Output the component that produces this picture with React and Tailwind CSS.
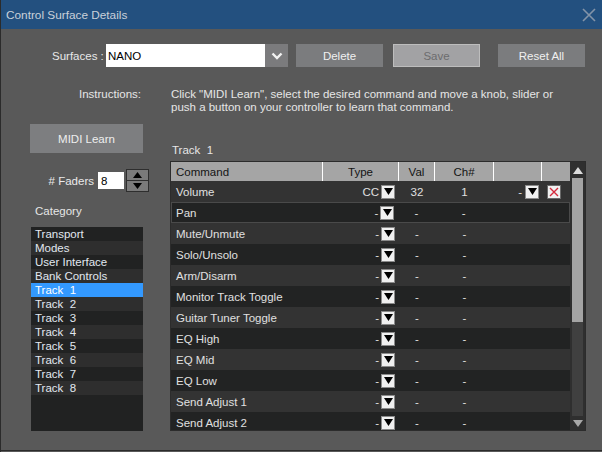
import React from "react";

const Tri = ({ up = false, color = "#000", w = 9, h = 6 }) => (
  <svg width={w} height={h} viewBox={`0 0 ${w} ${h}`} className="block">
    {up ? (
      <polygon points={`0,${h} ${w},${h} ${w / 2},0`} fill={color} />
    ) : (
      <polygon points={`0,0 ${w},0 ${w / 2},${h}`} fill={color} />
    )}
  </svg>
);

const DropBox = () => (
  <div className="w-[14px] h-[14px] bg-[#f0f0f0] border border-[#8a8a8a] flex items-center justify-center">
    <Tri w={9} h={7} />
  </div>
);

const rows = [
  "Volume",
  "Pan",
  "Mute/Unmute",
  "Solo/Unsolo",
  "Arm/Disarm",
  "Monitor Track Toggle",
  "Guitar Tuner Toggle",
  "EQ High",
  "EQ Mid",
  "EQ Low",
  "Send Adjust 1",
  "Send Adjust 2",
];

const cats = [
  "Transport",
  "Modes",
  "User Interface",
  "Bank Controls",
  "Track  1",
  "Track  2",
  "Track  3",
  "Track  4",
  "Track  5",
  "Track  6",
  "Track  7",
  "Track  8",
];

export default function App() {
  return (
    <div
      className="w-[602px] h-[452px] bg-[#595959] border-l border-[#2b2b2b] overflow-hidden flex flex-col text-[11.5px] leading-[14px] text-[#e6e6e6]"
      style={{ fontFamily: '"Liberation Sans", Arial, sans-serif' }}
    >
      {/* Title bar */}
      <div className="h-[29px] shrink-0 bg-[#23507f] flex items-center justify-between pl-[5px] pr-[6px]">
        <span className="text-[#c9d0da] text-[11.8px]">Control Surface Details</span>
        <svg width="14" height="14" viewBox="0 0 14 14" className="block">
          <path d="M1 1 L13 13 M13 1 L1 13" stroke="#8494a8" strokeWidth="1.6" />
        </svg>
      </div>

      {/* Surfaces row */}
      <div className="flex items-center mt-[15px] h-[23px] shrink-0">
        <span className="ml-[51px] w-[54px] text-[#e8e8e8] whitespace-nowrap">Surfaces :</span>
        <div className="w-[159px] h-[23px] bg-white text-black flex items-center pl-[2px]">NANO</div>
        <div className="w-[23px] h-[23px] bg-[#7b7b7d] flex items-center justify-center">
          <svg width="12" height="8" viewBox="0 0 12 8" className="block">
            <path d="M1.5 1.5 L6 6 L10.5 1.5" stroke="#f2f2f2" strokeWidth="2.4" fill="none" />
          </svg>
        </div>
        <div className="ml-[8px] w-[87px] h-[23px] bg-[#7b7c7e] flex items-center justify-center text-[#f0f0f0]">Delete</div>
        <div className="ml-[10px] w-[87px] h-[23px] bg-[#a2a2a4] border border-[#bdbdbd] flex items-center justify-center text-[#6c6c6e]">Save</div>
        <div className="ml-[18px] w-[87px] h-[23px] bg-[#7b7c7e] flex items-center justify-center text-[#f0f0f0]">Reset All</div>
      </div>

      {/* Instructions */}
      <div className="flex mt-[21px] shrink-0 leading-[13px]">
        <span className="ml-[78px] w-[92px] text-[#e6e6e6]">Instructions:</span>
        <span className="w-[410px] text-[#e6e6e6]">
          Click "MIDI Learn", select the desired command and move a knob, slider or
          <br />
          push a button on your controller to learn that command.
        </span>
      </div>

      {/* Main columns */}
      <div className="flex mt-[10px]">
        {/* Left column */}
        <div className="ml-[29px] w-[140px] flex flex-col">
          <div className="w-[113px] h-[29px] bg-[#7d7e80] flex items-center justify-center text-[#eeeeee]">MIDI Learn</div>
          <div className="flex items-center mt-[16px] h-[23px]">
            <span className="w-[64px] text-right text-[#eaeaea]">#&nbsp;Faders</span>
            <div className="ml-[4px] w-[26px] h-[17px] bg-white text-black flex items-center pl-[3px]">8</div>
            <div className="ml-[2px] w-[23px] h-[23px] border border-[#2e2e2e] flex flex-col">
              <div className="flex-1 bg-[#7a7a7a] border-b border-[#2e2e2e] flex items-center justify-center">
                <Tri up w={9} h={6} />
              </div>
              <div className="flex-1 bg-[#7a7a7a] flex items-center justify-center">
                <Tri w={9} h={6} />
              </div>
            </div>
          </div>
          <div className="ml-[5px] mt-[12px] text-[#e6e6e6]">Category</div>
          <div className="ml-[1px] mt-[9px] w-[112px] h-[204px] bg-[#212222] flex flex-col">
            {cats.map((c, i) => (
              <div
                key={c}
                className={
                  "h-[14px] pl-[4px] whitespace-pre leading-[14px] text-[#e2e8f0] " +
                  (i === 4 ? "bg-[#3399ff] text-white" : i % 2 === 0 ? "bg-[#212222]" : "bg-[#2e2e2e]")
                }
              >
                {c}
              </div>
            ))}
          </div>
        </div>

        {/* Right column */}
        <div className="flex flex-col">
          <div className="ml-[2px] mt-[19px] whitespace-pre text-[#e6e6e6]">Track  1</div>
          <div className="mt-[4px] w-[416px] h-[270px] border border-[#2c2c2c] flex">
            <div className="w-[399px] flex flex-col overflow-hidden">
              {/* Header */}
              <div className="h-[19px] shrink-0 bg-[#a5a5a5] text-[#141414] flex">
                <div className="w-[152px] border-r border-white pl-[5px] flex items-center">Command</div>
                <div className="w-[76px] border-r border-white flex items-center justify-center">Type</div>
                <div className="w-[36px] border-r border-white flex items-center justify-center">Val</div>
                <div className="w-[59px] border-r border-white flex items-center justify-center">Ch#</div>
                <div className="w-[48px] border-r border-white"></div>
                <div className="w-[28px]"></div>
              </div>
              {/* Rows */}
              {rows.map((r, i) => {
                const first = i === 0;
                return (
                  <div
                    key={r}
                    className={
                      "h-[21px] shrink-0 flex items-center text-[#e0e0e0] " +
                      (i % 2 === 0 ? "bg-[#333333]" : "bg-[#222323]") +
                      (i === 1 ? " border border-[#4a4a4a]" : "")
                    }
                  >
                    <div className={(i === 1 ? "w-[151px] pl-[4px]" : "w-[152px] pl-[5px]") + " truncate"}>{r}</div>
                    <div className="w-[76px] flex items-center justify-end pr-[4px] gap-[2px]">
                      <span>{first ? "CC" : "-"}</span>
                      <DropBox />
                    </div>
                    <div className="w-[36px] text-center">{first ? "32" : "-"}</div>
                    <div className="w-[59px] text-center">{first ? "1" : "-"}</div>
                    <div className="w-[48px] flex items-center justify-end pr-[3px] gap-[3px]">
                      {first && (
                        <>
                          <span>-</span>
                          <DropBox />
                        </>
                      )}
                    </div>
                    <div className="w-[28px] flex items-center pl-[5px]">
                      {first && (
                        <div className="w-[14px] h-[14px] bg-[#f0f0f0] border border-[#6a6a6a] flex items-center justify-center">
                          <svg width="10" height="10" viewBox="0 0 10 10" className="block">
                            <path d="M1 1 L9 9 M9 1 L1 9" stroke="#d42a3c" strokeWidth="1.4" />
                          </svg>
                        </div>
                      )}
                    </div>
                  </div>
                );
              })}
            </div>
            {/* Scrollbar */}
            <div className="w-[15px] bg-[#2f2f2f] flex flex-col items-center">
              <div className="h-[16px] w-full flex items-center justify-center">
                <Tri up color="#dcdcdc" w={10} h={7} />
              </div>
              <div className="flex-1 w-[11px] bg-[#404040] flex flex-col">
                <div className="h-[144px] bg-[#a4a4a4]"></div>
              </div>
              <div className="h-[14px] w-full flex items-center justify-center">
                <Tri color="#a8a8a8" w={10} h={7} />
              </div>
            </div>
          </div>
        </div>
      </div>

      <div className="mt-auto mb-[1px] h-[1px] bg-[#2b2b2b]"></div>
    </div>
  );
}
